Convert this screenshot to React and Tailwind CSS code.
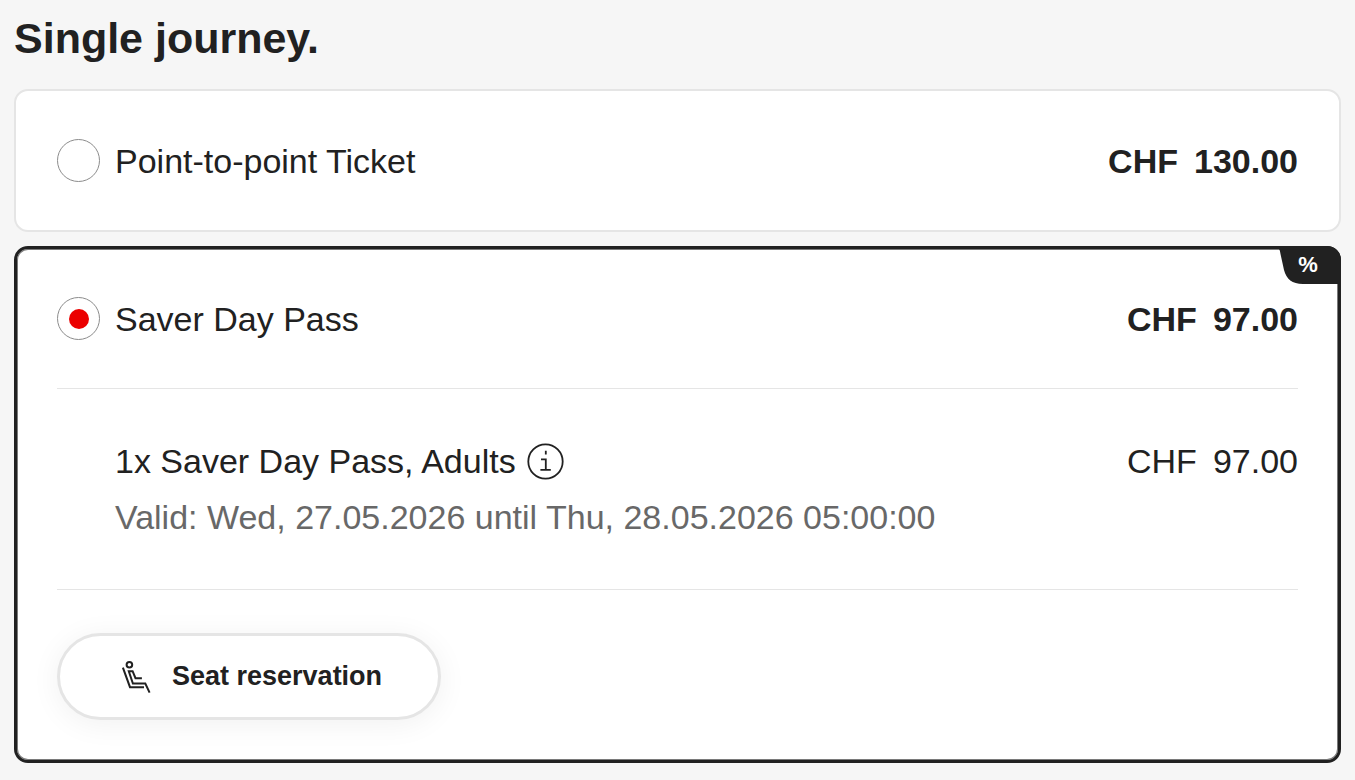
import React, { useState } from 'react';

function SeatIcon() {
  return (
    <svg width="32" height="36" viewBox="0 0 32 36" fill="none" stroke="#212121" strokeWidth="2" aria-hidden="true">
      <circle cx="9.4" cy="5.7" r="2.8" />
      <path d="M2.9 8.6 10 28.2h14" />
      <path d="M29.6 33.6 25.3 24.5H12.9L8.8 12.2h3.8l2.9 7h6.4" />
    </svg>
  );
}

function InfoIcon() {
  return (
    <svg width="38" height="38" viewBox="0 0 38 38" fill="none" stroke="#212121" strokeWidth="1.8" aria-hidden="true">
      <circle cx="19.5" cy="19.5" r="17.2" />
      <path d="M15 17.4h4.8v10.4M14.4 27.8h10.4M19.8 8.8v3.8" />
    </svg>
  );
}

// Coin sombre avec le pourcentage
function SaverBadge() {
  return (
    <div className="absolute -top-[3px] -right-[3px] w-[62px] h-[38px] flex items-center justify-center pr-1">
      <svg className="absolute inset-0" width="62" height="38" viewBox="0 0 62 38" aria-hidden="true">
        <path d="M0 0H48A14 14 0 0 1 62 14V38H24C13 38 7.500 33 5 24L1.500 8Q1 4 0 3Z" fill="#212121" />
      </svg>
      <span className="relative text-white text-[22px] leading-none font-bold">%</span>
    </div>
  );
}

function TicketOption({ id, label, price, checked, onChange }) {
  return (
    <div className="flex items-center justify-between py-12">
      <div className="flex items-center gap-[15px]">
        <input
          type="radio"
          name="ticket"
          id={id}
          checked={checked}
          onChange={onChange}
          className="appearance-none grid place-content-center size-[43px] rounded-full border border-[#8c8c8c] bg-white
                     checked:before:block checked:before:size-5 checked:before:rounded-full checked:before:bg-[#eb0000]"
        />
        <label htmlFor={id} className="text-[34px] leading-10">{label}</label>
      </div>
      <span className="flex gap-4 text-[34px] leading-10 font-bold">
        <span>CHF</span>
        <span>{price}</span>
      </span>
    </div>
  );
}

export default function App() {
  const [selected, setSelected] = useState('saver');

  return (
    <main className="min-h-screen bg-[#f6f6f6] px-[14px] pt-3 pb-4 text-[#212121] font-['Liberation_Sans',Arial,sans-serif]">
      <h1 className="mb-[25px] text-[43px] leading-[52px] font-bold">Single journey.</h1>

      <div className="flex flex-col gap-[14px]">
        <section className="rounded-[14px] border-2 border-[#e5e5e5] bg-white px-[41px]">
          <TicketOption
            id="point"
            label="Point-to-point Ticket"
            price="130.00"
            checked={selected === 'point'}
            onChange={() => setSelected('point')}
          />
        </section>

        <section className="relative rounded-[14px] border-3 border-[#212121] bg-white px-10 pb-10 shadow-[inset_0_0_0_1px_#7a7a7a]">
          <SaverBadge />
          <TicketOption
            id="saver"
            label="Saver Day Pass"
            price="97.00"
            checked={selected === 'saver'}
            onChange={() => setSelected('saver')}
          />

          <div className="border-y border-[#e5e5e5] py-11 pl-[58px] text-[34px] leading-[56px]">
            <div className="flex items-center justify-between">
              <div className="flex items-center gap-[10px]">
                <span>1x Saver Day Pass, Adults</span>
                <button type="button" aria-label="Info">
                  <InfoIcon />
                </button>
              </div>
              <span className="flex gap-4">
                <span>CHF</span>
                <span>97.00</span>
              </span>
            </div>
            <p className="text-[#686868]">Valid: Wed, 27.05.2026 until Thu, 28.05.2026 05:00:00</p>
          </div>

          <button
            type="button"
            className="mt-[43px] flex h-[87px] items-center gap-5 rounded-full border-3 border-[#e5e5e5] bg-white
                       pl-[60px] pr-14 text-[27px] font-bold shadow-[0_4px_30px_rgba(0,0,0,0.06)]"
          >
            <SeatIcon />
            Seat reservation
          </button>
        </section>
      </div>
    </main>
  );
}
